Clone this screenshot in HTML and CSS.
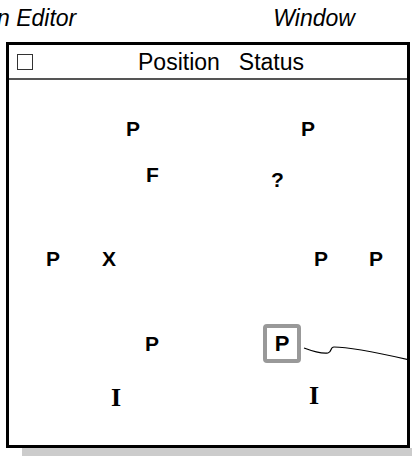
FILE: index.html
```html
<!DOCTYPE html>
<html>
<head>
<meta charset="utf-8">
<link rel="stylesheet" href="styles.css">
</head>
<body>
<div class="titles">
  <span class="title-left">n Editor</span>
  <span class="title-right">Window</span>
</div>
<div class="frame">
  <div class="header">
    <span class="check"></span>
    <span class="col col-pos">Position</span>
    <span class="col col-status">Status</span>
  </div>
  <div class="canvas">
    <span class="node" style="left:117px;top:38px">P</span>
    <span class="node" style="left:292px;top:38px">P</span>
    <span class="node" style="left:137px;top:84px">F</span>
    <span class="node" style="left:262px;top:89px">?</span>
    <span class="node" style="left:37px;top:168px">P</span>
    <span class="node" style="left:93px;top:168px">X</span>
    <span class="node" style="left:305px;top:168px">P</span>
    <span class="node" style="left:360px;top:168px">P</span>
    <span class="node" style="left:136px;top:253px">P</span>
    <span class="boxed" style="left:254px;top:244px">P</span>
    <span class="inode" style="left:102px;top:305px">I</span>
    <span class="inode" style="left:300px;top:303px">I</span>
    <svg class="wire" width="398" height="365" viewBox="0 0 398 365">
      <path d="M295 268 C303 271 312 274 319 273 C323 272 321 267 325 267 C340 267 370 273 401 280" fill="none" stroke="#000" stroke-width="1.2"/>
    </svg>
  </div>
</div>
<div class="shadow"></div>
</body>
</html>
```
FILE: styles.css
```css
html, body {
  margin: 0;
  padding: 0;
  background: #fff;
}
body {
  width: 412px;
  height: 456px;
  overflow: hidden;
  font-family: "Liberation Sans", Arial, sans-serif;
  color: #000;
}
.titles {
  height: 42px;
  box-sizing: border-box;
  padding-top: 7px;
  display: flex;
  font-size: 23px;
  line-height: 23px;
  font-style: italic;
  white-space: nowrap;
}
.title-left {
  margin-left: -3px;
}
.title-right {
  margin-left: 197px;
}
.frame {
  margin-left: 6px;
  width: 404px;
  height: 406px;
  box-sizing: border-box;
  border: 3px solid #000;
  display: flex;
  flex-direction: column;
  overflow: hidden;
}
.header {
  height: 33px;
  flex: none;
  display: flex;
  align-items: center;
  border-bottom: 2px solid #555;
  font-size: 23px;
  line-height: 24px;
  white-space: nowrap;
}
.check {
  width: 16px;
  height: 16px;
  box-sizing: border-box;
  border: 1px solid #333;
  margin-left: 8px;
  flex: none;
}
.col-pos {
  margin-left: 105px;
}
.col-status {
  margin-left: 19px;
}
.canvas {
  position: relative;
  flex: 1;
}
.node {
  position: absolute;
  font-weight: bold;
  font-size: 21px;
  line-height: 21px;
}
.boxed {
  position: absolute;
  width: 38px;
  height: 39px;
  box-sizing: border-box;
  border: 4px solid #999;
  border-radius: 4px;
  display: flex;
  align-items: center;
  justify-content: center;
  font-weight: bold;
  font-size: 22px;
  line-height: 22px;
}
.inode {
  position: absolute;
  font-family: "Liberation Serif", "Times New Roman", serif;
  font-weight: bold;
  font-size: 26px;
  line-height: 26px;
}
.wire {
  position: absolute;
  left: 0;
  top: 0;
}
.shadow {
  margin-left: 22px;
  height: 8px;
  background: #ccc;
}
```
